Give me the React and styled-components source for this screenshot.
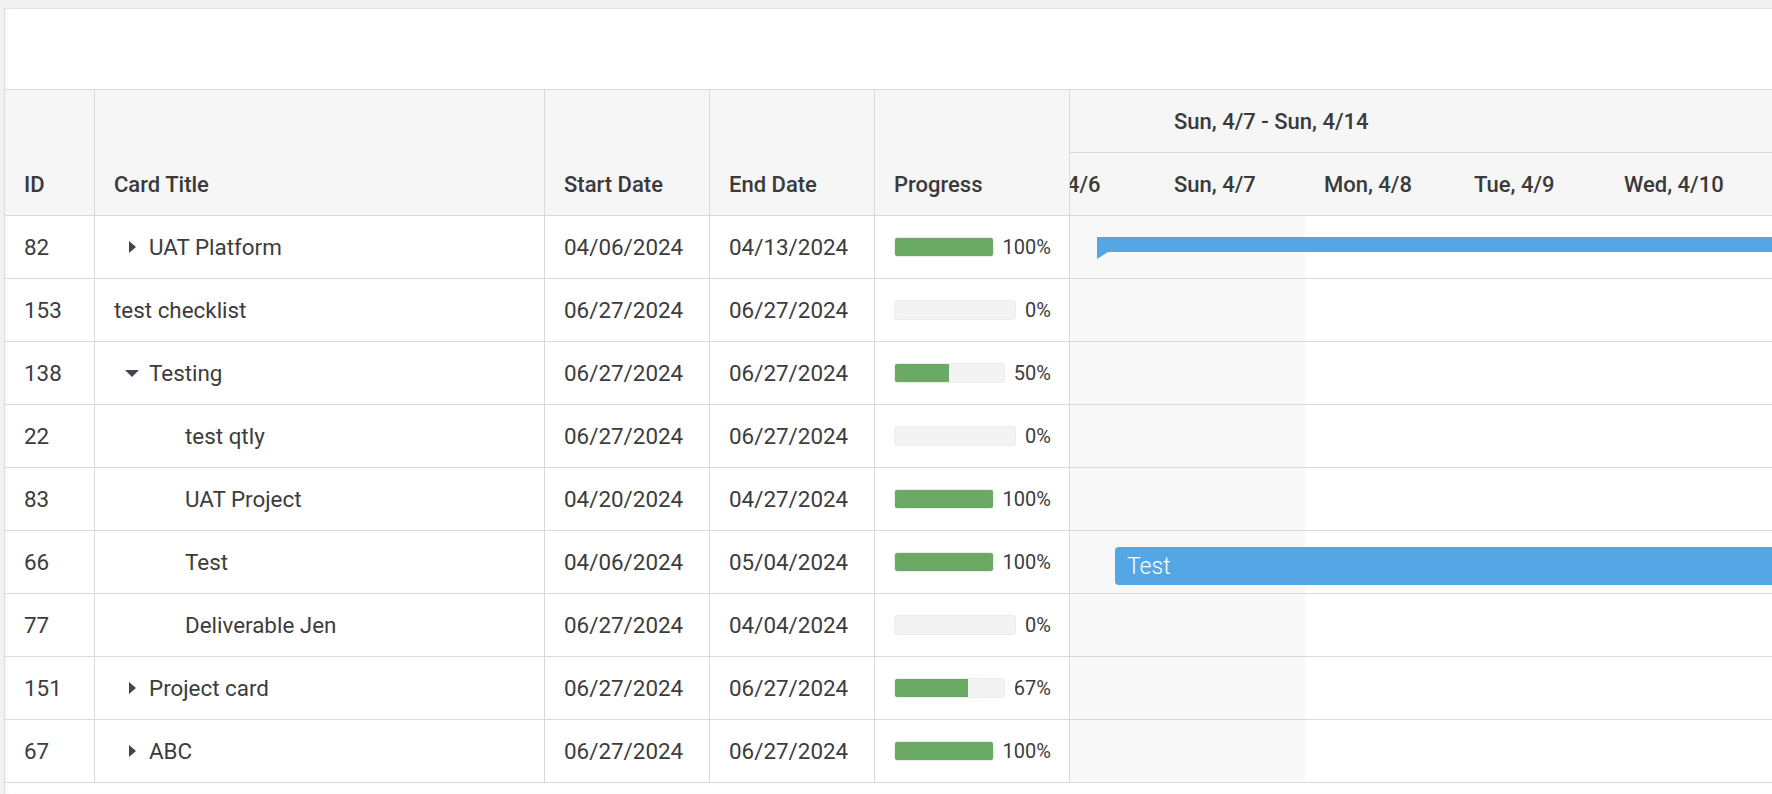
import React from "react";
import styled, { createGlobalStyle } from "styled-components";

const GlobalStyle = createGlobalStyle`
  html, body {
    margin: 0;
    padding: 0;
    height: 100%;
    background: #f1f1f1;
    font-family: Roboto, "Liberation Sans", Arial, sans-serif;
    color: #3c3c3c;
  }
  #root {
    height: 100%;
  }
`;

const rows = [
  { id: 82, title: "UAT Platform", depth: 0, expander: "closed", start: "04/06/2024", end: "04/13/2024", progress: 100, bar: { kind: "summary", left: 27 } },
  { id: 153, title: "test checklist", depth: 0, start: "06/27/2024", end: "06/27/2024", progress: 0 },
  { id: 138, title: "Testing", depth: 0, expander: "open", start: "06/27/2024", end: "06/27/2024", progress: 50 },
  { id: 22, title: "test qtly", depth: 1, expander: "leaf", start: "06/27/2024", end: "06/27/2024", progress: 0 },
  { id: 83, title: "UAT Project", depth: 1, expander: "leaf", start: "04/20/2024", end: "04/27/2024", progress: 100 },
  { id: 66, title: "Test", depth: 1, expander: "leaf", start: "04/06/2024", end: "05/04/2024", progress: 100, bar: { kind: "task", left: 45, label: "Test" } },
  { id: 77, title: "Deliverable Jen", depth: 1, expander: "leaf", start: "06/27/2024", end: "04/04/2024", progress: 0 },
  { id: 151, title: "Project card", depth: 0, expander: "closed", start: "06/27/2024", end: "06/27/2024", progress: 67 },
  { id: 67, title: "ABC", depth: 0, expander: "closed", start: "06/27/2024", end: "06/27/2024", progress: 100 },
];

const columns = [
  { key: "id", label: "ID", width: 90 },
  { key: "title", label: "Card Title", width: 450 },
  { key: "start", label: "Start Date", width: 165 },
  { key: "end", label: "End Date", width: 165 },
  { key: "progress", label: "Progress", width: 195 },
];

// first week is scrolled out of view, only its tail shows
const weeks = ["", "Sun, 4/7 - Sun, 4/14"];
const days = ["Sat, 4/6", "Sun, 4/7", "Mon, 4/8", "Tue, 4/9", "Wed, 4/10"];

const App = () => {
  return (
    <>
      <GlobalStyle />
      <Page>
        <Toolbar />
        <Gantt>
          <Grid>
            <GridHeader>
              {columns.map((c) => (
                <HeaderCell key={c.key} $width={c.width}>
                  <HeaderLabel>{c.label}</HeaderLabel>
                </HeaderCell>
              ))}
            </GridHeader>
            {rows.map((r) => (
              <Row key={r.id}>
                <Cell $width={90}>{r.id}</Cell>
                <Cell $width={450}>
                  <Indent $depth={r.depth} />
                  {r.expander && (
                    <Expander>
                      {r.expander === "closed" && <CaretRight />}
                      {r.expander === "open" && <CaretDown />}
                    </Expander>
                  )}
                  {r.title}
                </Cell>
                <Cell $width={165}>{r.start}</Cell>
                <Cell $width={165}>{r.end}</Cell>
                <Cell $width={195} $right={18}>
                  <Track>
                    <Fill style={{ width: `${r.progress}%` }} />
                  </Track>
                  <Percent>{r.progress}%</Percent>
                </Cell>
              </Row>
            ))}
          </Grid>

          <Timeline>
            <ScaleRow>
              <ScaleStrip $offset={-965}>
                {weeks.map((w, i) => (
                  <WeekCell key={i}>{w}</WeekCell>
                ))}
              </ScaleStrip>
            </ScaleRow>
            <ScaleRow>
              <ScaleStrip $offset={-65}>
                {days.map((d) => (
                  <DayCell key={d}>{d}</DayCell>
                ))}
              </ScaleStrip>
            </ScaleRow>
            <ChartBody>
              {rows.map((r) => (
                <ChartRow key={r.id}>
                  {r.bar && r.bar.kind === "summary" && (
                    <SummaryBar style={{ left: r.bar.left }} />
                  )}
                  {r.bar && r.bar.kind === "task" && (
                    <TaskBar style={{ left: r.bar.left }}>{r.bar.label}</TaskBar>
                  )}
                </ChartRow>
              ))}
            </ChartBody>
          </Timeline>
        </Gantt>
      </Page>
    </>
  );
};

const Page = styled.div`
  box-sizing: border-box;
  margin: 8px 0 0 4px;
  height: calc(100% - 8px);
  background: #ffffff;
  border-top: 1px solid #e2e2e2;
  border-left: 1px solid #dcdcdc;
  box-shadow: inset 3px 0 4px -2px rgba(0, 0, 0, 0.05);
  overflow: hidden;
`;

const Toolbar = styled.div`
  height: 80px;
  border-bottom: 1px solid #d9d9d9;
`;

const Gantt = styled.div`
  display: flex;
  align-items: flex-start;
`;

const Grid = styled.div`
  flex: 0 0 1065px;
  display: flex;
  flex-direction: column;
`;

const GridHeader = styled.div`
  display: flex;
  height: 126px;
  box-sizing: border-box;
  background: #f6f6f6;
  border-bottom: 1px solid #d9d9d9;
`;

const HeaderCell = styled.div`
  box-sizing: border-box;
  width: ${(p) => p.$width}px;
  border-right: 1px solid #d9d9d9;
  padding-left: 19px;
  display: flex;
  align-items: flex-end;
`;

const HeaderLabel = styled.div`
  height: 62px;
  display: flex;
  align-items: center;
  font-size: 22px;
  font-weight: 500;
  color: #3a3a3a;
`;

const Row = styled.div`
  display: flex;
  height: 63px;
  box-sizing: border-box;
  border-bottom: 1px solid #d9d9d9;
`;

const Cell = styled.div`
  box-sizing: border-box;
  width: ${(p) => p.$width}px;
  border-right: 1px solid #d9d9d9;
  padding-left: 19px;
  padding-right: ${(p) => p.$right || 0}px;
  display: flex;
  align-items: center;
  font-size: 22.4px;
  white-space: nowrap;
`;

const Indent = styled.span`
  flex: 0 0 ${(p) => p.$depth * 36}px;
`;

const Expander = styled.span`
  flex: 0 0 35px;
  display: flex;
  align-items: center;
  justify-content: center;
  height: 20px;
`;

const CaretRight = styled.span`
  width: 0;
  height: 0;
  border-top: 6px solid transparent;
  border-bottom: 6px solid transparent;
  border-left: 7px solid #3f4653;
  margin-left: 1px;
`;

const CaretDown = styled.span`
  width: 0;
  height: 0;
  border-left: 7px solid transparent;
  border-right: 7px solid transparent;
  border-top: 7px solid #3f4653;
`;

const Track = styled.div`
  flex: 1;
  height: 20px;
  box-sizing: border-box;
  background: #f3f3f3;
  border: 1px solid #ececec;
  border-radius: 3px;
  overflow: hidden;
`;

const Fill = styled.div`
  height: 100%;
  background: #6aaa64;
`;

const Percent = styled.span`
  margin-left: 9px;
  font-size: 20px;
  color: #3c3c3c;
`;

const Timeline = styled.div`
  flex: 1;
  min-width: 0;
  overflow: hidden;
`;

const ScaleRow = styled.div`
  height: 63px;
  box-sizing: border-box;
  background: #f6f6f6;
  border-bottom: 1px solid #d9d9d9;
  overflow: hidden;
`;

const ScaleStrip = styled.div`
  display: flex;
  height: 100%;
  margin-left: ${(p) => p.$offset}px;
`;

const WeekCell = styled.div`
  flex: 0 0 1050px;
  box-sizing: border-box;
  padding-left: 19px;
  display: flex;
  align-items: center;
  font-size: 22px;
  font-weight: 500;
  color: #3a3a3a;
  white-space: nowrap;
`;

const DayCell = styled(WeekCell)`
  flex: 0 0 150px;
`;

const ChartBody = styled.div`
  background: linear-gradient(to right, #f8f8f8 0, #f8f8f8 235px, #ffffff 235px);
`;

const ChartRow = styled.div`
  position: relative;
  height: 63px;
  box-sizing: border-box;
  border-bottom: 1px solid #d9d9d9;
`;

const SummaryBar = styled.div`
  position: absolute;
  top: 21px;
  right: -20px;
  height: 15px;
  background: #54a7e4;

  &::after {
    content: "";
    position: absolute;
    left: 0;
    top: 100%;
    border-top: 7px solid #54a7e4;
    border-right: 11px solid transparent;
  }
`;

const TaskBar = styled.div`
  position: absolute;
  top: 16px;
  right: -20px;
  height: 38px;
  box-sizing: border-box;
  padding-left: 12px;
  display: flex;
  align-items: center;
  background: #54a7e4;
  border-radius: 4px;
  color: #ffffff;
  font-size: 23px;
  font-weight: 300;
`;

export default App;
